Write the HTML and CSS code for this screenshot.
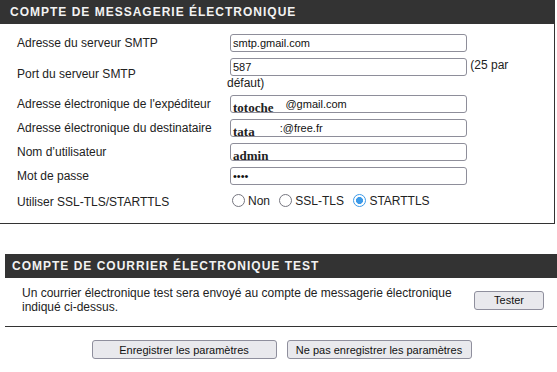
FILE: index.html
```html
<!DOCTYPE html>
<html lang="fr">
<head>
    <meta charset="UTF-8">
    <title>Compte de messagerie électronique</title>
    <link rel="stylesheet" href="styles.css">
</head>
<body>
    <!-- Compte de messagerie -->
    <div class="panel">
        <div class="panel-title">COMPTE DE MESSAGERIE ÉLECTRONIQUE</div>
        <div class="panel-body">
            <table class="settings">
                <tr>
                    <td class="label">Adresse du serveur SMTP</td>
                    <td class="value"><input class="field" type="text" value="smtp.gmail.com"></td>
                </tr>
                <tr class="tall">
                    <td class="label">Port du serveur SMTP</td>
                    <td class="value"><input class="field" type="text" value="587"> (25 par défaut)</td>
                </tr>
                <tr>
                    <td class="label">Adresse électronique de l'expéditeur</td>
                    <td class="value">
                        <div class="field"><span class="redact r-long">totoche</span>@gmail.com</div>
                    </td>
                </tr>
                <tr>
                    <td class="label">Adresse électronique du destinataire</td>
                    <td class="value">
                        <div class="field"><span class="redact r-short">tata</span>:@free.fr</div>
                    </td>
                </tr>
                <tr>
                    <td class="label">Nom d’utilisateur</td>
                    <td class="value">
                        <div class="field"><span class="redact">admin</span></div>
                    </td>
                </tr>
                <tr>
                    <td class="label">Mot de passe</td>
                    <td class="value"><input class="field" type="password" value="1234"></td>
                </tr>
                <tr class="radio-row">
                    <td class="label">Utiliser SSL-TLS/STARTTLS</td>
                    <td class="value radios">
                        <label><input type="radio" name="ssl">Non</label>
                        <label><input type="radio" name="ssl">SSL-TLS</label>
                        <label><input type="radio" name="ssl" checked>STARTTLS</label>
                    </td>
                </tr>
            </table>
        </div>
    </div>

    <!-- Compte de test -->
    <div class="panel panel-test">
        <div class="panel-title">COMPTE DE COURRIER ÉLECTRONIQUE TEST</div>
        <div class="test-row">
            <p>Un courrier électronique test sera envoyé au compte de messagerie électronique indiqué ci-dessus.</p>
            <button class="btn btn-small">Tester</button>
        </div>
        <div class="actions">
            <button class="btn btn-wide">Enregistrer les paramètres</button>
            <button class="btn btn-wide">Ne pas enregistrer les paramètres</button>
        </div>
    </div>
</body>
</html>
```

FILE: styles.css
```css
/* Base */
body {
    margin: 0;
    font-family: 'Liberation Sans', Arial, sans-serif;
    font-size: 12px;
    color: #222;
    background: #fff;
    overflow: hidden;
}

/* Panels */
.panel {
    width: 555px;
}

.panel-title {
    height: 24px;
    line-height: 24px;
    padding-left: 10px;
    background: #333;
    color: #f2f2f2;
    font-weight: bold;
    letter-spacing: 1px;
}

.panel-body {
    padding: 7px 0 11px 15px;
    border-right: 1px solid #333;
    border-bottom: 1px solid #333;
}

/* Settings table */
.settings {
    border-collapse: collapse;
}

.settings td {
    padding: 3px 0;
    vertical-align: middle;
}

.settings .label {
    width: 208px;
    padding-left: 2px;
    padding-right: 2px;
}

.settings .value {
    width: 318px;
    line-height: 15px;
}

.settings .tall .value {
    padding-bottom: 1px;
}

.settings .radio-row td {
    padding-top: 6px;
}

.field {
    box-sizing: border-box;
    width: 237px;
    height: 18px;
    margin: 0 0 0 3px;
    padding: 0 2px;
    border: 1px solid #8e8e9a;
    border-radius: 3px;
    font-family: 'Liberation Sans', Arial, sans-serif;
    font-size: 11px;
    line-height: 16px;
    color: #111;
    vertical-align: top;
    background: #fff;
}

div.field {
    white-space: nowrap;
}

.redact {
    font-family: 'Liberation Serif', 'Times New Roman', serif;
    font-size: 13px;
    font-weight: bold;
    line-height: 0;
    vertical-align: -4px;
    color: #222;
}

.r-long {
    margin-right: 12px;
}

.r-short {
    margin-right: 25px;
}

/* Radios */
.radios label {
    margin-right: 1px;
}

.radios input {
    appearance: none;
    box-sizing: border-box;
    width: 13px;
    height: 13px;
    margin: 0 3px 0 5px;
    border: 1px solid #767680;
    border-radius: 50%;
    background: #fff;
    vertical-align: -2px;
}

.radios input:checked {
    border-color: #3d9ae8;
    background: radial-gradient(circle, #3d9ae8 0 3.2px, #fff 3.8px);
}

/* Test panel */
.panel-test {
    width: 553px;
    margin: 30px 0 0 5px;
}

.panel-test .panel-title {
    padding-left: 7px;
}

.test-row {
    display: flex;
    align-items: center;
    padding: 8px 0 12px 17px;
    border-bottom: 1px solid #333;
}

.test-row p {
    width: 452px;
    margin: 0;
    line-height: 14px;
}

/* Buttons */
.btn {
    height: 19px;
    padding: 0;
    background: #e9e9ed;
    border: 1px solid #8f8f9d;
    border-radius: 3px;
    font-family: 'Liberation Sans', Arial, sans-serif;
    font-size: 11px;
    color: #111;
}

.btn-small {
    width: 70px;
}

.btn-wide {
    width: 185px;
}

.actions {
    display: flex;
    justify-content: center;
    gap: 10px;
    margin-top: 13px;
}
```
